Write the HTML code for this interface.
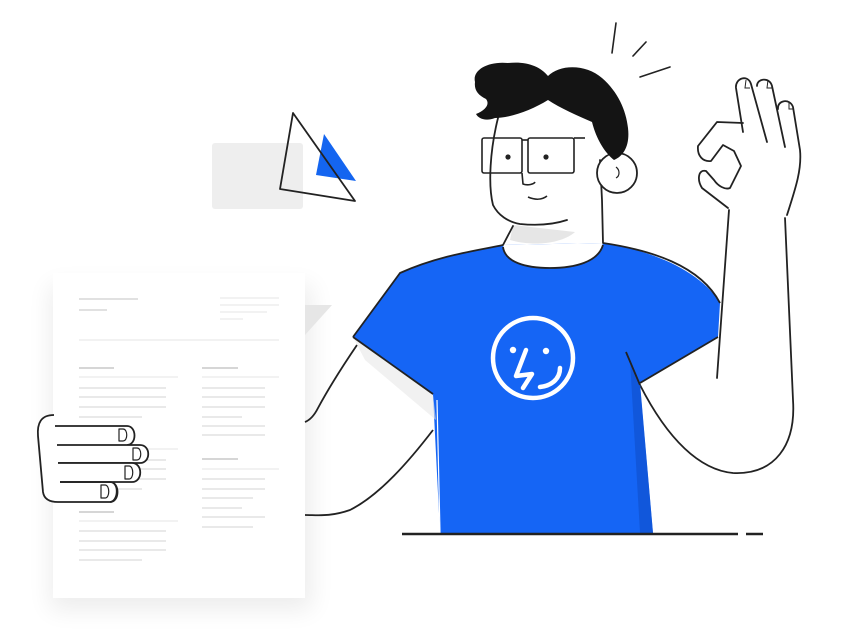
<!DOCTYPE html>
<html><head><meta charset="utf-8"><style>
html,body{margin:0;padding:0;background:#fff;}
svg{display:block;}
</style></head><body>
<svg width="852" height="633" viewBox="0 0 852 633" xmlns="http://www.w3.org/2000/svg">
<defs>
<filter id="sh" x="-30%" y="-30%" width="160%" height="160%"><feGaussianBlur stdDeviation="12"/></filter>
</defs>
<rect x="50" y="285" width="262" height="325" fill="#000" opacity="0.07" filter="url(#sh)"/>
<rect x="53" y="273" width="252" height="325" fill="#fff"/>
<polygon points="305,305 332,305 305,335" fill="#e6e6e6"/>
<g stroke-linecap="butt">
<g stroke="#cfcfcf" stroke-width="1.3">
<line x1="79" y1="299" x2="138" y2="299"/><line x1="79" y1="310" x2="107" y2="310"/>
</g>
<g stroke="#e6e6e6" stroke-width="1">
<line x1="220" y1="298" x2="279" y2="298"/><line x1="220" y1="305" x2="279" y2="305"/>
<line x1="220" y1="312" x2="267" y2="312"/><line x1="220" y1="319" x2="243" y2="319"/>
<line x1="79" y1="340" x2="279" y2="340"/>
<line x1="79" y1="377" x2="178" y2="377"/><line x1="202" y1="377" x2="279" y2="377"/>
<line x1="79" y1="449" x2="178" y2="449"/><line x1="202" y1="469" x2="279" y2="469"/>
<line x1="79" y1="521" x2="178" y2="521"/>
</g>
<g stroke="#d6d6d6" stroke-width="2">
<line x1="79" y1="368" x2="114" y2="368"/><line x1="202" y1="368" x2="238" y2="368"/>
<line x1="202" y1="459" x2="238" y2="459"/><line x1="79" y1="512" x2="114" y2="512"/>
</g>
<g stroke="#e2e2e2" stroke-width="1.5">
<line x1="79" y1="388" x2="166" y2="388"/><line x1="79" y1="397" x2="166" y2="397"/>
<line x1="79" y1="407" x2="166" y2="407"/><line x1="79" y1="417" x2="142" y2="417"/>
<line x1="79" y1="460" x2="166" y2="460"/><line x1="79" y1="469" x2="166" y2="469"/>
<line x1="79" y1="479" x2="166" y2="479"/><line x1="79" y1="489" x2="142" y2="489"/>
<line x1="79" y1="531" x2="166" y2="531"/><line x1="79" y1="541" x2="166" y2="541"/>
<line x1="79" y1="550" x2="166" y2="550"/><line x1="79" y1="560" x2="142" y2="560"/>
<line x1="202" y1="388" x2="265" y2="388"/><line x1="202" y1="397" x2="265" y2="397"/>
<line x1="202" y1="407" x2="265" y2="407"/><line x1="202" y1="417" x2="242" y2="417"/>
<line x1="202" y1="426" x2="265" y2="426"/><line x1="202" y1="435" x2="265" y2="435"/>
<line x1="202" y1="479" x2="265" y2="479"/><line x1="202" y1="489" x2="265" y2="489"/>
<line x1="202" y1="498" x2="253" y2="498"/><line x1="202" y1="508" x2="242" y2="508"/>
<line x1="202" y1="517" x2="265" y2="517"/><line x1="202" y1="527" x2="253" y2="527"/>
</g>
</g>
<g fill="#fff" stroke="#222" stroke-width="1.8" stroke-linejoin="round">
<path d="M54,415 C41,415 37,423 38,436 L43,492 C44,499 49,502 58,502 L110,502 C118,502 120,482 110,482"/>
<path d="M55,426 L127,426 C137,426 137,445 127,445"/>
<path d="M57,445 L140,445 C151,445 151,463 140,463 L58,463"/>
<path d="M58,463 L132,463 C143,463 143,482 132,482 L60,482"/>
<path d="M60,482 L110,482 C120,482 120,502 110,502" fill="none"/>
<g fill="none" stroke-width="1.2">
<path d="M119,429 L119,441 L123,441 C128,441 128,429 123,429 Z"/>
<path d="M133,448 L133,460 L137,460 C142,460 142,448 137,448 Z"/>
<path d="M125,466 L125,479 L129,479 C134,479 134,466 129,466 Z"/>
<path d="M101,485 L101,498 L105,498 C110,498 110,485 105,485 Z"/>
</g>
</g>
<rect x="212" y="143" width="91" height="66" rx="3" fill="#eeeeee"/>
<polygon points="324,134 316,175 356,181" fill="#1465f0"/>
<polygon points="293,113 280,189 355,201" fill="none" stroke="#222" stroke-width="1.8" stroke-linejoin="round"/>
<g fill="none" stroke="#222" stroke-width="1.8">
<path d="M357,345 C340,370 325,395 318,408 C314,416 310,420 305,422"/>
<path d="M433,430 C410,460 380,495 350,510 C330,517 318,515 305,515"/>
</g>
<path d="M729,208 L717,378 L642,383 C660,420 690,470 733,473 C780,473 800,440 793,400 L785,220 C800,180 800,130 797,107 Z" fill="#fff"/>
<g fill="none" stroke="#222" stroke-width="1.8" stroke-linecap="round" stroke-linejoin="round">
<path d="M729,210 L717,378"/>
<path d="M785,218 L793,400 C796,445 775,475 733,473 C700,470 668,440 640,385"/>
<path d="M743,132 L736,88 C735,78 748,74 751,84 L767,142"/>
<path d="M757,86 C757,78 770,77 772,86 L785,147"/>
<path d="M778,109 C777,100 790,98 793,107 L800,150 C802,170 795,190 787,215"/>
<path d="M743,123 L717,122 L698,146 C697,156 703,162 711,161 L723,145 L734,151 L741,166 L730,188 C725,190 718,186 714,180 L706,171 C698,169 697,180 702,188 L728,208"/>
</g>
<g fill="none" stroke="#222" stroke-width="1"><path d="M746,80 L745,88 L750,88"/><path d="M768,80 L767,88 L772,88"/><path d="M789,102 L789,109 L794,109"/></g>
<path d="M400,273 C440,255 480,250 503,245 L603,243 C650,250 700,270 720,303 L718,337 L640,383 L653,533 L440,533 L433,395 L353,337 Z" fill="#1565f5"/>
<path d="M630,360 L640,385 L653,533 L640,533 Z" fill="#0f4fc9" opacity="0.6"/>
<path d="M353,337 L433,395 L436,420 L365,360 Z" fill="#e8e8e8" opacity="0.6"/>
<path d="M503,245 C505,262 525,268 550,268 C575,268 598,262 603,243 Z" fill="#fff"/>
<g fill="none" stroke="#222" stroke-width="1.8" stroke-linejoin="round">
<path d="M353,337 L400,273 C440,255 480,250 503,245"/>
<path d="M603,243 C650,250 700,265 720,303"/>
<path d="M718,337 L640,383"/>
<path d="M353,337 L433,394"/>
<path d="M626,352 L640,385"/>
<path d="M503,247 C505,262 525,268 550,268 C575,268 598,262 603,245"/>
</g>
<line x1="437" y1="400" x2="440" y2="533" stroke="#fff" stroke-width="1.2"/>
<g fill="none" stroke="#fff" stroke-width="4.5" stroke-linecap="round" stroke-linejoin="round">
<circle cx="533" cy="358" r="40"/>
<path d="M526,350 L516,376 L532,374 L523,388"/>
<path d="M560,368 C560,380 550,386 540,387"/>
</g>
<circle cx="513" cy="350" r="3.2" fill="#fff"/><circle cx="546" cy="351" r="3.2" fill="#fff"/>
<path d="M513,225 L510,240 C530,246 560,245 575,232 Z" fill="#e6e6e6"/>
<path d="M498,118 C490,150 488,185 493,205 C498,222 520,228 567,220 L600,160 L600,120 Z" fill="#fff"/>
<g fill="none" stroke="#222" stroke-width="1.8" stroke-linecap="round" stroke-linejoin="round">
<path d="M498,118 C490,150 488,185 493,205 C498,215 508,222 520,224 C540,226 555,224 567,220"/>
<path d="M513,226 L503,245"/>
<path d="M600,160 L602,200 L603,243"/>
</g>
<circle cx="617" cy="173" r="20" fill="#fff" stroke="#222" stroke-width="1.8"/>
<path d="M616,167 C620,170 620,176 616,178" fill="none" stroke="#222" stroke-width="1.2"/>
<path d="M475,82 C472,70 488,61 508,63 C526,61 540,66 548,76 C560,64 586,64 602,78 C618,92 626,110 628,128 C630,145 624,156 614,160 C604,152 596,138 592,122 C578,116 560,108 548,100 C532,110 510,118 495,118 C485,122 478,118 476,114 C486,110 490,104 486,99 C478,95 474,90 475,82 Z" fill="#141414"/>
<g fill="none" stroke="#222" stroke-width="1.6" stroke-linejoin="round">
<rect x="482" y="138" width="40" height="35" rx="2"/>
<rect x="528" y="138" width="46" height="35" rx="2"/>
<line x1="522" y1="140" x2="528" y2="140"/><line x1="574" y1="138" x2="585" y2="138"/>
<path d="M522,173 L523,184 C528,186 534,184 535,182"/>
<path d="M528,197 C535,200 542,200 547,196"/>
</g>
<circle cx="508" cy="157" r="2.6" fill="#222"/><circle cx="546" cy="157" r="2.6" fill="#222"/>
<g stroke="#222" stroke-width="1.6" stroke-linecap="round">
<line x1="616" y1="23" x2="612" y2="53"/><line x1="646" y1="42" x2="633" y2="56"/><line x1="670" y1="67" x2="640" y2="77"/>
</g>
<line x1="402" y1="534" x2="738" y2="534" stroke="#222" stroke-width="2.5"/>
<line x1="746" y1="534" x2="763" y2="534" stroke="#222" stroke-width="2.5"/>
</svg>
</body></html>
